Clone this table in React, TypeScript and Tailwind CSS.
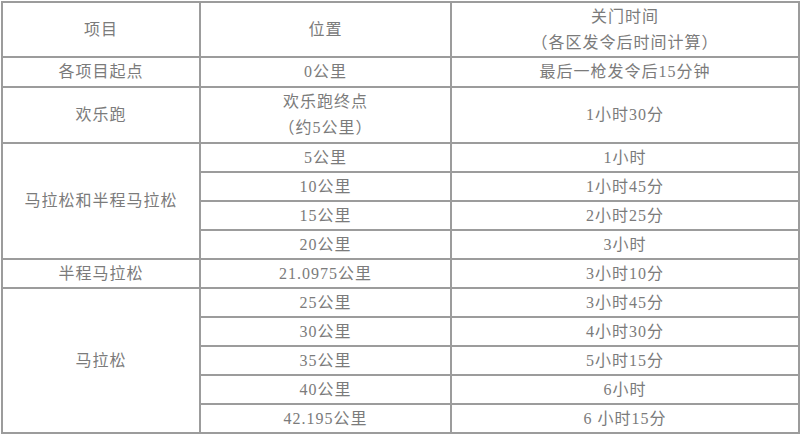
const rows: { item?: string; span?: number; pos: string[]; time: string; h: string }[] = [
  { item: '各项目起点', span: 1, pos: ['0公里'], time: '最后一枪发令后15分钟', h: 'h-[30px]' },
  { item: '欢乐跑', span: 1, pos: ['欢乐跑终点', '（约5公里）'], time: '1小时30分', h: 'h-[56px]' },
  { item: '马拉松和半程马拉松', span: 4, pos: ['5公里'], time: '1小时', h: 'h-[29px]' },
  { pos: ['10公里'], time: '1小时45分', h: 'h-[29px]' },
  { pos: ['15公里'], time: '2小时25分', h: 'h-[29px]' },
  { pos: ['20公里'], time: '3小时', h: 'h-[29px]' },
  { item: '半程马拉松', span: 1, pos: ['21.0975公里'], time: '3小时10分', h: 'h-[29px]' },
  { item: '马拉松', span: 5, pos: ['25公里'], time: '3小时45分', h: 'h-[29px]' },
  { pos: ['30公里'], time: '4小时30分', h: 'h-[29px]' },
  { pos: ['35公里'], time: '5小时15分', h: 'h-[29px]' },
  { pos: ['40公里'], time: '6小时', h: 'h-[29px]' },
  { pos: ['42.195公里'], time: '6 小时15分', h: 'h-[29px]' },
]

const cell = 'border-2 border-[#9c9c9c] text-center align-middle p-0'

export default function App() {
  return (
    <div className="w-[800px] h-[435px] bg-white pt-[1px] pl-[1px] font-['Liberation_Serif','Noto_Sans_CJK_SC',serif] text-[16px] leading-[22px] tracking-[1px] text-[#7b7b7b]">
      <table className="w-[797px] table-fixed border-collapse">
        <colgroup>
          <col className="w-[198px]" />
          <col className="w-[251px]" />
          <col className="w-[348px]" />
        </colgroup>
        <tbody>
          <tr className="h-[55px]">
            <td className={cell}>项目</td>
            <td className={cell}>位置</td>
            <td className={cell}>
              <div className="leading-[26px]">关门时间</div>
              <div className="leading-[26px]">（各区发令后时间计算）</div>
            </td>
          </tr>
          {rows.map((r, i) => (
            <tr key={i} className={r.h}>
              {r.item && (
                <td className={cell} rowSpan={r.span}>
                  {r.item}
                </td>
              )}
              <td className={cell}>
                {r.pos.map((p) => (
                  <div key={p} className={r.pos.length > 1 ? 'leading-[26px]' : ''}>
                    {p}
                  </div>
                ))}
              </td>
              <td className={`${cell} whitespace-pre`}>{r.time}</td>
            </tr>
          ))}
        </tbody>
      </table>
    </div>
  )
}
